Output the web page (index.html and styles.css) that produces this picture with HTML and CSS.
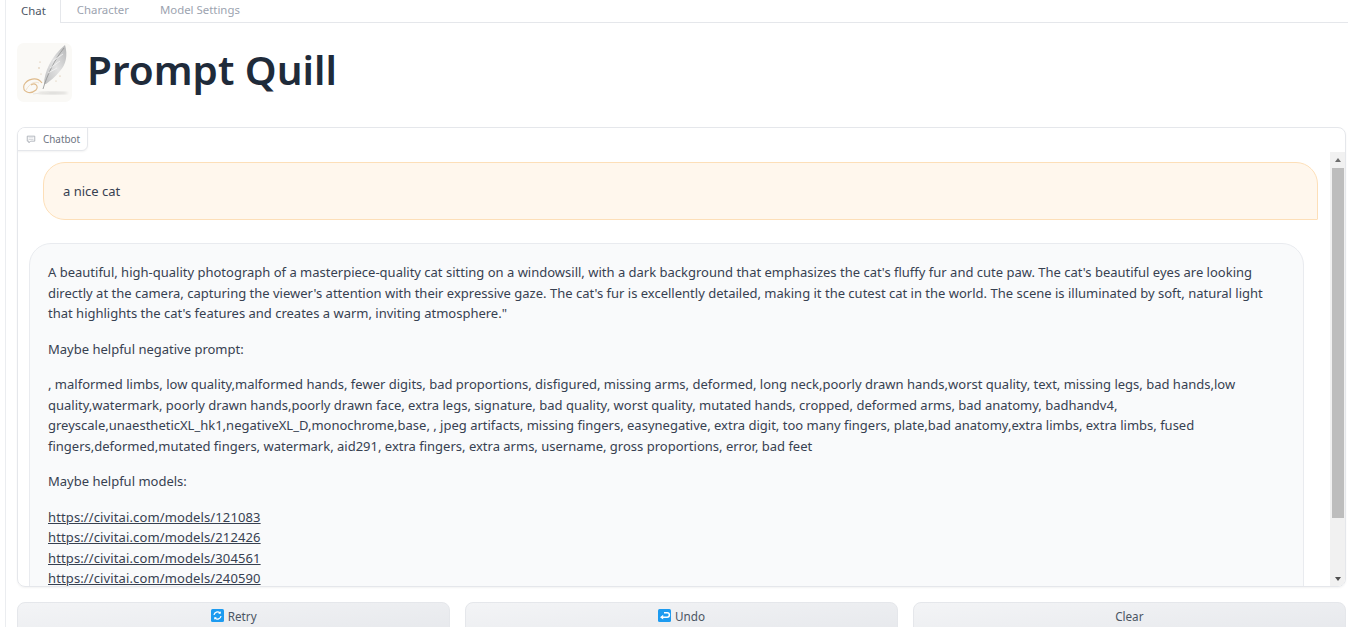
FILE: index.html
```html
<!DOCTYPE html>
<html lang="en">
<head>
<meta charset="utf-8">
<title>Prompt Quill</title>
<link rel="stylesheet" href="styles.css">
</head>
<body>
<div class="app">
  <nav class="tabs">
    <button class="tab active">Chat</button>
    <button class="tab">Character</button>
    <button class="tab">Model Settings</button>
  </nav>
  <main class="panel">
    <header class="title-row">
      <svg class="logo" viewBox="0 0 55 59" aria-hidden="true">
        <defs>
          <linearGradient id="fe" x1="0" y1="1" x2="1" y2="0">
            <stop offset="0" stop-color="#bfc0c1"/>
            <stop offset=".5" stop-color="#e2e2e2"/>
            <stop offset="1" stop-color="#b4b5b6"/>
          </linearGradient>
          <filter id="soft"><feGaussianBlur stdDeviation=".45"/></filter>
          <filter id="softer"><feGaussianBlur stdDeviation="1.1"/></filter>
        </defs>
        <rect width="55" height="59" rx="7" fill="#faf9f6"/>
        <ellipse cx="36" cy="50" rx="15" ry="1.5" fill="#d9d8d5" filter="url(#softer)"/>
        <g filter="url(#soft)">
          <path d="M27 41C27 30 34 13 48 2C51 12 49 22 43 28C38 34 33 38 29 41Z" fill="url(#fe)"/>
          <path d="M26 46C30 32 38 16 47 5" stroke="#8f9091" stroke-width=".8" fill="none"/>
          <path d="M31 30L40 25M33 25L43 18M36 18L46 11" stroke="#f4f4f4" stroke-width=".8" fill="none"/>
          <path d="M25 40C20 33 10 36 7 42C5 49 13 52 19 47C22 43 18 39 14 42" stroke="#dfbb8c" stroke-width="1.1" fill="none"/>
          <path d="M9 47C13 40 18 38 22 40" stroke="#efdcc2" stroke-width=".8" fill="none"/>
          <path d="M16 51L32 49" stroke="#e8e7e4" stroke-width="1.2"/>
        </g>
        <circle cx="23" cy="19" r=".6" fill="#cdb28e"/><circle cx="22" cy="25" r=".7" fill="#cdb28e"/><circle cx="24" cy="31" r=".5" fill="#cdb28e"/><circle cx="43" cy="33" r=".6" fill="#cdb28e"/><circle cx="39" cy="38" r=".5" fill="#cdb28e"/>
      </svg>
      <h1 class="title">Prompt Quill</h1>
    </header>
    <section class="chatbot">
      <div class="label">
        <svg class="label-icon" viewBox="0 0 12 10" aria-hidden="true"><path d="M1.5 1h9v6h-5l-2 2V7h-2Z" fill="none" stroke="#a3a8b1" stroke-width="1"/><path d="M3 3h6M3 5h6" stroke="#c4c7cd" stroke-width=".8"/></svg>
        <span>Chatbot</span>
      </div>
      <div class="scroller">
        <div class="messages">
          <div class="bubble user"><p>a nice cat</p></div>
          <div class="bubble bot">
            <p>A beautiful, high-quality photograph of a masterpiece-quality cat sitting on a windowsill, with a dark background that emphasizes the cat's fluffy fur and cute paw. The cat's beautiful eyes are looking directly at the camera, capturing the viewer's attention with their expressive gaze. The cat's fur is excellently detailed, making it the cutest cat in the world. The scene is illuminated by soft, natural light that highlights the cat's features and creates a warm, inviting atmosphere."</p>
            <p>Maybe helpful negative prompt:</p>
            <p>, malformed limbs, low quality,malformed hands, fewer digits, bad proportions, disfigured, missing arms, deformed, long neck,poorly drawn hands,worst quality, text, missing legs, bad hands,low quality,watermark, poorly drawn hands,poorly drawn face, extra legs, signature, bad quality, worst quality, mutated hands, cropped, deformed arms, bad anatomy, badhandv4, greyscale,unaestheticXL_hk1,negativeXL_D,monochrome,base, , jpeg artifacts, missing fingers, easynegative, extra digit, too many fingers, plate,bad anatomy,extra limbs, extra limbs, fused fingers,deformed,mutated fingers, watermark, aid291, extra fingers, extra arms, username, gross proportions, error, bad feet</p>
            <p>Maybe helpful models:</p>
            <p><a href="#">https://civitai.com/models/121083</a><br><a href="#">https://civitai.com/models/212426</a><br><a href="#">https://civitai.com/models/304561</a><br><a href="#">https://civitai.com/models/240590</a></p>
          </div>
        </div>
        <div class="scrollbar" aria-hidden="true">
          <span class="arrow up"></span>
          <span class="thumb"></span>
          <span class="arrow down"></span>
        </div>
      </div>
    </section>
    <div class="actions">
      <button class="btn">
        <svg class="emoji" viewBox="0 0 13 13" aria-hidden="true"><rect width="13" height="13" rx="1.5" fill="#1d9bf0"/><path d="M3 6a3.5 3.5 0 0 1 6-2M10 7a3.5 3.5 0 0 1-6 2" fill="none" stroke="#fff" stroke-width="1.2"/><path d="M9.8 2.2v2.6H7.2ZM3.2 10.8V8.2h2.6Z" fill="#fff"/></svg>
        Retry
      </button>
      <button class="btn">
        <svg class="emoji" viewBox="0 0 13 13" aria-hidden="true"><rect width="13" height="13" rx="1.5" fill="#1d9bf0"/><path d="M6 3.8h3.2a2 2 0 0 1 0 4.4H3.5" fill="none" stroke="#fff" stroke-width="1.5"/><path d="M5.2 5.8V10.6L2 8.2Z" fill="#fff"/></svg>
        Undo
      </button>
      <button class="btn">Clear</button>
    </div>
  </main>
</div>
</body>
</html>
```

FILE: styles.css
```css
* { box-sizing: border-box; }
html, body { margin: 0; height: 100%; background: #fff; overflow: hidden; }
body { font-family: "Noto Sans", "Open Sans", sans-serif; color: #374151; }
.app { margin-left: 5px; height: 627px; border-left: 1px solid #ebedf0; overflow: hidden; }

.tabs { display: flex; height: 23px; border-bottom: 1px solid #e5e7eb; }
.tab { font: inherit; font-size: 11.4px; color: #9ca3af; background: none; border: 0; padding: 0 15.5px 3px; height: 22px; }
.tab.active { color: #4b5563; background: #fff; border-right: 1px solid #e5e7eb; height: 23px; padding-left: 15px; padding-right: 14.5px; }

.panel { display: flex; flex-direction: column; padding: 0 2px 0 11px; }
.title-row { display: flex; align-items: flex-start; gap: 15px; padding-top: 20px; height: 104px; }
.logo { width: 55px; height: 59px; flex: none; }
.title { margin: 0; font-size: 40.5px; font-weight: 600; line-height: 54px; color: #1f2b3a; }

.chatbot { position: relative; height: 460px; border: 1px solid #e5e7eb; border-radius: 8px; overflow: hidden; box-shadow: 0 1px 2px rgba(0,0,0,.05); }
.label { position: absolute; top: -1px; left: -1px; z-index: 2; height: 24px; display: flex; align-items: center; gap: 7px; padding: 0 7px 0 8px; font-size: 9.9px; color: #6b7280; background: #fff; border: 1px solid #e5e7eb; border-radius: 0 0 6px 0; box-shadow: 0 1px 2px rgba(0,0,0,.05); }
.label-icon { width: 10px; height: 9px; }

.scroller { display: flex; height: 100%; padding-top: 24px; }
.messages { flex: 1; min-width: 0; overflow: hidden; padding: 10px 12px 0 10px; }
.bubble { font-size: 13px; line-height: 20.5px; border: 1px solid; width: 1275px; }
.bubble p { margin: 0 0 15px; }
.bubble p:last-child { margin-bottom: 0; }
.bubble a { color: inherit; text-decoration: underline; letter-spacing: .12px; }
.user { margin-left: 15px; height: 58px; padding: 18px 19px; color: #374151; background: #fff7ed; border-color: #fddfb8; border-radius: 22px 22px 1px 22px; }
.bot { margin: 23px 0 0 1px; padding: 18px 19px 40px 18px; background: #f9fafb; border-color: #e9ebef; border-radius: 22px 22px 22px 1px; }

.scrollbar { flex: none; width: 15px; display: flex; flex-direction: column; align-items: center; background: #f1f1f1; }
.arrow { flex: none; width: 0; height: 0; border-left: 3.5px solid transparent; border-right: 3.5px solid transparent; }
.arrow.up { margin-top: 6px; margin-bottom: 6px; border-bottom: 4px solid #6e6e6e; }
.arrow.down { margin-top: auto; margin-bottom: 5px; border-top: 4px solid #505050; }
.thumb { width: 12px; height: 350px; background: #bdbdbd; }

.actions { display: grid; grid-template-columns: repeat(3, 1fr); gap: 14.5px; margin-top: 15px; }
.btn { font: inherit; font-size: 11.7px; height: 40px; padding: 0 0 13px; display: flex; align-items: center; justify-content: center; gap: 4px; color: #4b5563; border: 1px solid #e5e7eb; border-radius: 8px; background: linear-gradient(to bottom right, #f3f4f6, #e5e7eb); }
.emoji { width: 13px; height: 13px; }
```
